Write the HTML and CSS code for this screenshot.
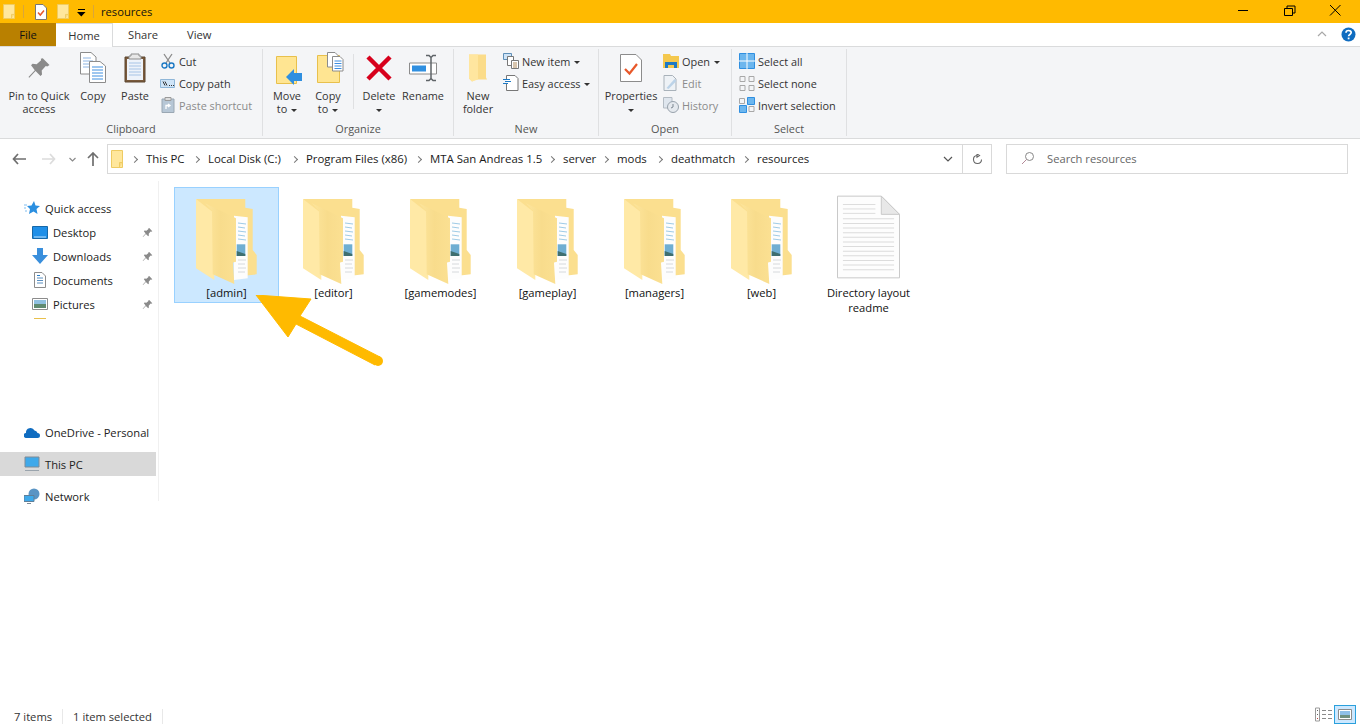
FILE: index.html
```html
<!DOCTYPE html>
<html lang="en">
<head>
    <meta charset="UTF-8" />
    <title>resources</title>
    <link rel="stylesheet" href="styles.css">
</head>
<body>

<!-- Shared icons -->
<svg class="defs" width="0" height="0">
    <defs>
        <linearGradient id="flapShade" x1="0" x2="1" y1="0" y2="0">
            <stop offset="0" stop-color="#fde59c"/>
            <stop offset="0.5" stop-color="#f8dc8c"/>
            <stop offset="1" stop-color="#fbe092"/>
        </linearGradient>
    </defs>
    <symbol id="folderSmall" viewBox="0 0 12 18" preserveAspectRatio="none">
        <path d="M.5.500h11v17H.5z" fill="#ffe79c" stroke="#eecb62"/>
        <path d="M8.500 17.500v-5h3" fill="#f8da80" stroke="#eecb62"/>
    </symbol>
    <symbol id="folderBig" viewBox="0 0 62 86">
        <path d="M0 0H49.300V8.700L56.700 10V51L60.700 56V75.300L46 77Z" fill="#fbdf8f"/>
        <path d="M38 16.700L51.700 18.300V79.300L38 81Z" fill="#fdfdfd"/>
        <path d="M42 24l8 1M42 28l7 1M42 32l8 1M42 36l7 1M42 40l8 1" stroke="#9fcbe6" fill="none"/>
        <path d="M42 61h8M42 65h7M42 69h8M42 73h7" stroke="#d6d9dc" fill="none"/>
        <path d="M40.700 45.300H49.300V57H40.700Z" fill="#6faed2"/>
        <path d="M40.700 52L49.300 55V57H40.700Z" fill="#3f6f70"/>
        <path d="M0 0L18.300 14.300V81L0 69.300Z" fill="#ffe9a6"/>
        <path d="M9 4.300L40 19.300V62.700L37 63.500L38.300 85L16.700 75.300L16 12Z" fill="url(#flapShade)"/>
    </symbol>
    <symbol id="pin" viewBox="0 0 16 16">
        <path d="M10.500 1.500L15 6l-1.500 1-1-.3-2.700 3 .2 2.600-1 1L5.700 10 1.500 14.500 1 14l4.200-4.500L2.700 6.200l1-1 2.700.3 3-2.700-.2-1Z" fill="#8a8a8a"/>
    </symbol>
    <symbol id="pc" viewBox="0 0 16 16">
        <path d="M1 1h14v10H1z" fill="#3fa9ea" stroke="#7e8b96"/>
        <path d="M1 14.500h14" stroke="#9aa4ad"/>
    </symbol>
</svg>

<div class="window">
    <!-- Title bar -->
    <header class="titlebar">
        <svg class="t-folder" width="12" height="15"><use href="#folderSmall"/></svg>
        <span class="t-sep"></span>
        <svg class="t-props" width="12" height="16" viewBox="0 0 12 16">
            <path d="M.5.500H8L11.500 4V15.500H.5Z" fill="#fff" stroke="#777"/>
            <path d="M3 8.500L5.300 11 9 6.500" fill="none" stroke="#e8582a" stroke-width="1.500"/>
        </svg>
        <svg class="t-folder2" width="12" height="15"><use href="#folderSmall"/></svg>
        <svg class="t-drop" width="9" height="8" viewBox="0 0 9 8"><path d="M1 0h7v1H1zM0 3h8.500L4.300 7.500z"/></svg>
        <span class="t-sep"></span>
        <span class="t-name">resources</span>
        <div class="win-btns">
            <svg width="46" height="23" viewBox="0 0 46 23"><path d="M18 10.500h10" stroke="#000"/></svg>
            <svg width="46" height="23" viewBox="0 0 46 23"><path d="M18.500 8.500h8v7h-8zM21 8V6h8v7h-2.500" fill="none" stroke="#000"/></svg>
            <svg width="46" height="23" viewBox="0 0 46 23"><path d="M18 5l10.500 10.500M28.500 5L18 15.500" stroke="#000"/></svg>
        </div>
    </header>

    <!-- Tabs -->
    <nav class="tabs">
        <span class="tab tab-file">File</span>
        <span class="tab tab-home">Home</span>
        <span class="tab tab-share">Share</span>
        <span class="tab tab-view">View</span>
        <svg class="tab-collapse" width="10" height="6" viewBox="0 0 10 6"><path d="M1 5l4-4 4 4" fill="none" stroke="#a8a8a8" stroke-width="1.200"/></svg>
        <svg class="tab-help" width="15" height="15" viewBox="0 0 15 15">
            <circle cx="7.500" cy="7.500" r="7" fill="#0f6cc0"/>
            <path d="M5 5.700C5 2.800 10.200 2.800 10.200 5.600 10.200 7.500 7.600 7.400 7.600 9.300" fill="none" stroke="#fff" stroke-width="1.700"/>
            <path d="M6.700 10.500h1.800v1.800H6.700z" fill="#fff"/>
        </svg>
    </nav>

    <!-- Ribbon -->
    <section class="ribbon">
        <div class="group g-clipboard">
            <div class="group-body">
                <div class="big w-pin">
                    <svg width="24" height="24" class="big-icon"><use href="#pin"/></svg>
                    <span>Pin to Quick<br>access</span>
                </div>
                <div class="big w-copy">
                    <svg width="26" height="32" viewBox="0 0 26 32" class="big-icon">
                        <path d="M.5.500H11L16 5V22H.5Z" fill="#fff" stroke="#8c8c8c"/>
                        <path d="M3 6h8M3 9h10M3 12h10M3 15h10" stroke="#8db4e2"/>
                        <path d="M9.500 9.500H20L25.500 14V30.500H9.500Z" fill="#fff" stroke="#8c8c8c"/>
                        <path d="M12 15h11M12 18h11M12 21h11M12 24h11M12 27h11" stroke="#3f8fe0"/>
                    </svg>
                    <span>Copy</span>
                </div>
                <div class="big w-paste">
                    <svg width="22" height="30" viewBox="0 0 22 30" class="big-icon">
                        <path d="M1 4h20v25H1z" fill="#7a5a3c" stroke="#5d4630"/>
                        <path d="M3 6h16v21H3z" fill="#eef3fa"/>
                        <path d="M5 10h12M5 13h12M5 16h12M5 19h12M5 22h12" stroke="#a7c4e6"/>
                        <path d="M7 1h8v2h2v3H5V3h2z" fill="#e8e8e8" stroke="#8c8c8c"/>
                    </svg>
                    <span>Paste</span>
                </div>
                <div class="small-col">
                    <div class="small">
                        <svg width="14" height="16" viewBox="0 0 14 16">
                            <path d="M3 1l6 9M11 1L5 10" stroke="#8b8b8b" stroke-width="1.300"/>
                            <circle cx="3.500" cy="12.500" r="2.500" fill="none" stroke="#1d79c4" stroke-width="1.400"/>
                            <circle cx="10.500" cy="12.500" r="2.500" fill="none" stroke="#1d79c4" stroke-width="1.400"/>
                        </svg>
                        <span>Cut</span>
                    </div>
                    <div class="small">
                        <svg width="16" height="9" viewBox="0 0 16 9">
                            <path d="M.5.500h14v8H.5z" fill="#cfe4f7" stroke="#8fb6d8"/>
                            <path d="M3 2.500l2 4M5 2.500l2 4M9 6.500h1M11 6.500h1M13 6.500h1" stroke="#333"/>
                        </svg>
                        <span>Copy path</span>
                    </div>
                    <div class="small off">
                        <svg width="14" height="16" viewBox="0 0 14 16">
                            <path d="M1 2h12v13.500H1z" fill="#b7c7d6" stroke="#9aa7b3"/>
                            <path d="M4 .5h6v3H4z" fill="#ddd" stroke="#9a9a9a"/>
                            <path d="M5 12V8.500h4M7 7l2 1.500L7 10" fill="none" stroke="#fff" stroke-width="1.300"/>
                        </svg>
                        <span>Paste shortcut</span>
                    </div>
                </div>
            </div>
            <div class="group-name">Clipboard</div>
        </div>

        <div class="group g-organize">
            <div class="group-body">
                <div class="big w-move">
                    <svg width="27" height="34" viewBox="0 -5 27 34" class="big-icon shift-right">
                        <path d="M.5.500h20v27H.5z" fill="#ffe592" stroke="#e8c04c"/>
                        <path d="M18 13l-8 8 8 8v-4h8v-8h-8z" fill="#2f8fe0"/>
                    </svg>
                    <span>Move<br>to <i class="caret"></i></span>
                </div>
                <div class="big w-copyto">
                    <svg width="27" height="32" viewBox="0 0 27 32" class="big-icon shift-right">
                        <path d="M.5 3.500h22v27H.5z" fill="#ffe592" stroke="#e8c04c"/>
                        <path d="M10.500.5H18l3 3V15H10.500z" fill="#fff" stroke="#8c8c8c"/>
                        <path d="M15.500 4.500H23l3 3V19H15.500z" fill="#fff" stroke="#8c8c8c"/>
                        <path d="M17.500 9h7M17.500 11.500h7M17.500 14h7M17.500 16.500h7" stroke="#3f8fe0"/>
                    </svg>
                    <span>Copy<br>to <i class="caret"></i></span>
                </div>
                <span class="rb-sep"></span>
                <div class="big w-delete">
                    <svg width="26" height="26" viewBox="0 0 26 26" class="big-icon">
                        <path d="M2 2l22 22M24 2L2 24" stroke="#d7001c" stroke-width="4.500"/>
                    </svg>
                    <span>Delete<br><i class="caret"></i></span>
                </div>
                <div class="big w-rename">
                    <svg width="29" height="27" viewBox="0 0 29 27" class="big-icon">
                        <path d="M.5 8.500h27v11H.5z" fill="#fff" stroke="#8c8c8c"/>
                        <path d="M3 11h14v6H3z" fill="#2f8fe0"/>
                        <path d="M17 1h3l2 2 2-2h3M22 3v21M17 26h3l2-2 2 2h3" fill="none" stroke="#5f6468" stroke-width="1.500"/>
                    </svg>
                    <span>Rename</span>
                </div>
            </div>
            <div class="group-name">Organize</div>
        </div>

        <div class="group g-new">
            <div class="group-body">
                <div class="big w-newfolder">
                    <svg width="18" height="27" viewBox="0 0 18 27" class="big-icon">
                        <path d="M0 0h17v23l1 2H7L3 27 0 24z" fill="#fbdc8a"/>
                        <path d="M0 0h9v25l-6 2-3-3z" fill="#ffe69f"/>
                    </svg>
                    <span>New<br>folder</span>
                </div>
                <div class="small-col">
                    <div class="small">
                        <svg width="16" height="16" viewBox="0 0 16 16">
                            <path d="M.5.500h8v6h-8z" fill="#cfe4f7" stroke="#5f8fb8"/>
                            <path d="M4.500 3.500h6v9h-6z" fill="#fff" stroke="#777"/>
                            <path d="M8.500 7.500h7v8h-7z" fill="#fff" stroke="#777"/>
                            <path d="M10 10h4M10 12h4M10 14h4" stroke="#b08a5a"/>
                        </svg>
                        <span>New item <i class="caret"></i></span>
                    </div>
                    <div class="small">
                        <svg width="16" height="16" viewBox="0 0 16 16">
                            <path d="M3.500 4V.5H12l3 3v12H3.500V9" fill="#fff" stroke="#777"/>
                            <path d="M0 4.500h7M2 6.500h6M0 8.500h5" stroke="#1d79c4"/>
                        </svg>
                        <span>Easy access <i class="caret"></i></span>
                    </div>
                </div>
            </div>
            <div class="group-name">New</div>
        </div>

        <div class="group g-open">
            <div class="group-body">
                <div class="big w-props">
                    <svg width="22" height="28" viewBox="0 0 22 28" class="big-icon">
                        <path d="M.5.500H16L21.500 6V27.500H.5Z" fill="#fff" stroke="#8c8c8c"/>
                        <path d="M5 15l4.500 4.500L17 10" fill="none" stroke="#e8582a" stroke-width="2.200"/>
                    </svg>
                    <span>Properties<br><i class="caret"></i></span>
                </div>
                <div class="small-col">
                    <div class="small">
                        <svg width="16" height="14" viewBox="0 0 16 14">
                            <path d="M0 0h7l1 2h8v12H0z" fill="#f4c84e"/>
                            <path d="M2 8h12v6h-3v-3H5v3H2z" fill="#1d79c4"/>
                        </svg>
                        <span>Open <i class="caret"></i></span>
                    </div>
                    <div class="small off">
                        <svg width="15" height="16" viewBox="0 0 15 16">
                            <path d="M.5.500H9L12.500 4V15.500H.5Z" fill="#eef2f6" stroke="#a9b2ba"/>
                            <path d="M3 13L11 4l2 2-8 8z" fill="#bcd3e8"/>
                        </svg>
                        <span>Edit</span>
                    </div>
                    <div class="small off">
                        <svg width="16" height="16" viewBox="0 0 16 16">
                            <path d="M.5.500H9V11H.5z" fill="#dfe6ee" stroke="#b4bcc4"/>
                            <circle cx="10" cy="10" r="5.500" fill="#e5e9ee" stroke="#98a2ac"/>
                            <path d="M10 7v3l-2 1" fill="none" stroke="#7d8791"/>
                        </svg>
                        <span>History</span>
                    </div>
                </div>
            </div>
            <div class="group-name">Open</div>
        </div>

        <div class="group g-select">
            <div class="group-body">
                <div class="small-col">
                    <div class="small">
                        <svg width="16" height="16" viewBox="0 0 16 16">
                            <path d="M.5.500h15v15H.5z" fill="#6cb6ee" stroke="#2f8fe0"/>
                            <path d="M8 0v16M0 8h16" stroke="#fff"/>
                        </svg>
                        <span>Select all</span>
                    </div>
                    <div class="small">
                        <svg width="15" height="15" viewBox="0 0 15 15">
                            <path d="M.5.500h5v5h-5zM9.500.5h5v5h-5zM.5 9.500h5v5h-5zM9.500 9.500h5v5h-5z" fill="none" stroke="#a8a8a8"/>
                        </svg>
                        <span>Select none</span>
                    </div>
                    <div class="small">
                        <svg width="16" height="16" viewBox="0 0 16 16">
                            <path d="M.5 1.500h5v5h-5zM10 9.500h5v5h-5z" fill="none" stroke="#a8a8a8"/>
                            <path d="M8.500.5h7v7h-7zM.5 8.500h7v7h-7z" fill="#6cb6ee" stroke="#2f8fe0"/>
                        </svg>
                        <span>Invert selection</span>
                    </div>
                </div>
            </div>
            <div class="group-name">Select</div>
        </div>
    </section>

    <!-- Address row -->
    <section class="addressbar">
        <svg class="nav-back" width="14" height="12" viewBox="0 0 14 12"><path d="M6 1L1.500 6 6 11M2 6h12" fill="none" stroke="#6f6f6f" stroke-width="1.700"/></svg>
        <svg class="nav-next" width="14" height="12" viewBox="0 0 14 12"><path d="M8 1l4.500 5L8 11M12 6H0" fill="none" stroke="#dcdcdc" stroke-width="1.700"/></svg>
        <svg class="nav-down" width="7" height="5" viewBox="0 0 7 5"><path d="M.5 1l3 3 3-3" fill="none" stroke="#8a8a8a" stroke-width="1.200"/></svg>
        <svg class="nav-up" width="12" height="14" viewBox="0 0 12 14"><path d="M1 6l5-5 5 5M6 2v12" fill="none" stroke="#6f6f6f" stroke-width="1.700"/></svg>
        <div class="address">
            <svg class="addr-folder" width="12" height="18"><use href="#folderSmall"/></svg>
            <div class="crumbs">
                <span class="crumb w-c1">This PC</span>
                <span class="crumb w-c2">Local Disk (C:)</span>
                <span class="crumb w-c3">Program Files (x86)</span>
                <span class="crumb w-c4">MTA San Andreas 1.5</span>
                <span class="crumb w-c5">server</span>
                <span class="crumb w-c6">mods</span>
                <span class="crumb w-c7">deathmatch</span>
                <span class="crumb w-c8">resources</span>
            </div>
            <svg class="addr-down" width="10" height="6" viewBox="0 0 10 6"><path d="M1 1l4 4 4-4" fill="none" stroke="#555" stroke-width="1.200"/></svg>
            <div class="addr-refresh">
                <svg width="11" height="11" viewBox="0 0 11 11"><path d="M5 1.500A4 4 0 1 0 9.500 5.500M5 0v3.200L7.500 1.500z" fill="none" stroke="#666" stroke-width="1.100"/></svg>
            </div>
        </div>
        <div class="search">
            <svg width="14" height="14" viewBox="0 0 14 14"><circle cx="8.500" cy="5.500" r="4" fill="none" stroke="#888"/><path d="M5.500 8.500L1 13" stroke="#b48a98"/></svg>
            <span>Search resources</span>
        </div>
    </section>

    <!-- Sidebar and files -->
    <main class="main">
        <aside class="sidebar">
            <div class="side-group">
                <div class="side-item head">
                    <svg width="16" height="16" viewBox="0 0 16 16">
                        <path d="M10 1l1.500 4.500L16 6l-3.500 3 1 5L9.500 11.500 5 14l1-5-3-3 4.500-.5z" fill="#2b8fe0"/>
                        <path d="M0 5h3M0 8h2M1 11h2" stroke="#7fbdf0"/>
                    </svg>
                    <span>Quick access</span>
                </div>
                <div class="side-item sub">
                    <svg width="16" height="13" viewBox="0 0 16 13"><path d="M.5.500h15v12H.5z" fill="#1f8fe8" stroke="#1668a8"/><path d="M2 11h12" stroke="#bfe0fa"/></svg>
                    <span>Desktop</span>
                    <svg class="pin-mark" width="11" height="11"><use href="#pin"/></svg>
                </div>
                <div class="side-item sub">
                    <svg width="16" height="16" viewBox="0 0 16 16"><path d="M5 0h6v7h5l-8 9-8-9h5z" fill="#3a8fdc"/></svg>
                    <span>Downloads</span>
                    <svg class="pin-mark" width="11" height="11"><use href="#pin"/></svg>
                </div>
                <div class="side-item sub">
                    <svg width="12" height="16" viewBox="0 0 12 16" class="ic-doc"><path d="M.5.500H8L11.500 4V15.500H.5Z" fill="#fff" stroke="#8c8c8c"/><path d="M3 6h6M3 8.500h6M3 11h6" stroke="#5a8fc0"/><path d="M3 3.500h3" stroke="#2b7fc8"/></svg>
                    <span>Documents</span>
                    <svg class="pin-mark" width="11" height="11"><use href="#pin"/></svg>
                </div>
                <div class="side-item sub">
                    <svg width="16" height="12" viewBox="0 0 16 12"><path d="M.5.500h15v11H.5z" fill="#fff" stroke="#8c8c8c"/><path d="M2 2h12v4H2z" fill="#8fc0e0"/><path d="M2 6h12v4H2z" fill="#5f8a70"/></svg>
                    <span>Pictures</span>
                    <svg class="pin-mark" width="11" height="11"><use href="#pin"/></svg>
                </div>
                <div class="side-clip"></div>
            </div>
            <div class="side-group onedrive">
                <div class="side-item head">
                    <svg width="16" height="11" viewBox="0 0 16 11"><path d="M2.500 11A2.500 2.500 0 0 1 2 6 4.500 4.500 0 0 1 10.500 3.500 3.800 3.800 0 0 1 13.500 6 2.500 2.500 0 0 1 13.500 11Z" fill="#0f6cc0"/></svg>
                    <span>OneDrive - Personal</span>
                </div>
            </div>
            <div class="side-group">
                <div class="side-item head active">
                    <svg width="16" height="16"><use href="#pc"/></svg>
                    <span>This PC</span>
                </div>
            </div>
            <div class="side-group">
                <div class="side-item head net">
                    <svg width="16" height="16" viewBox="0 0 16 16">
                        <circle cx="10" cy="6" r="5.500" fill="#5a94c4"/>
                        <path d="M0 7.500h10v6H0z" fill="#3fa9ea" stroke="#5f7f99"/>
                        <path d="M3 15.500h4" stroke="#7e8b96"/>
                    </svg>
                    <span>Network</span>
                </div>
            </div>
        </aside>

        <section class="files">
            <div class="tile selected"><svg class="tile-icon" width="62" height="86"><use href="#folderBig"/></svg><span>[admin]</span></div>
            <div class="tile"><svg class="tile-icon" width="62" height="86"><use href="#folderBig"/></svg><span>[editor]</span></div>
            <div class="tile"><svg class="tile-icon" width="62" height="86"><use href="#folderBig"/></svg><span>[gamemodes]</span></div>
            <div class="tile"><svg class="tile-icon" width="62" height="86"><use href="#folderBig"/></svg><span>[gameplay]</span></div>
            <div class="tile"><svg class="tile-icon" width="62" height="86"><use href="#folderBig"/></svg><span>[managers]</span></div>
            <div class="tile"><svg class="tile-icon" width="62" height="86"><use href="#folderBig"/></svg><span>[web]</span></div>
            <div class="tile">
                <svg class="tile-icon doc-icon" width="63" height="84" viewBox="0 0 64 84">
                    <path d="M.5.500H45L63.500 19V83.500H.5Z" fill="#fdfdfd" stroke="#c8c8c8"/>
                    <path d="M45 .5V19H63.500Z" fill="#e8e8e8" stroke="#c8c8c8"/>
                    <path d="M6 9h33M6 13.500h33M6 18h33" stroke="#dcdcdc"/>
                    <path d="M32 23V79" stroke="#dcdcdc" stroke-width="52" stroke-dasharray="1 3.700"/>
                </svg>
                <span>Directory layout<br>readme</span>
            </div>
        </section>
    </main>

    <!-- Status bar -->
    <footer class="statusbar">
        <span class="st-count">7 items</span>
        <span class="st-sep"></span>
        <span class="st-sel">1 item selected</span>
        <span class="st-sep"></span>
        <div class="views">
            <svg class="view-details" width="17" height="15" viewBox="0 0 17 15">
                <path d="M.5 1h4v13h-4z" fill="none" stroke="#9a9a9a"/>
                <path d="M2 3.500h1M2 7.500h1" stroke="#666"/>
                <path d="M2 11.500h1" stroke="#c04040"/>
                <path d="M7 3.500h4M13 3.500h4M7 7.500h4M13 7.500h4M7 11.500h4M13 11.500h4" stroke="#8a8a8a"/>
            </svg>
            <div class="view-large">
                <svg width="14" height="11" viewBox="0 0 14 11">
                    <path d="M.5.500h13v10H.5z" fill="#fff" stroke="#8c8c8c"/>
                    <path d="M2 2h10v4H2z" fill="#8fc0e8"/>
                    <path d="M2 6h10v3H2z" fill="#6f9080"/>
                </svg>
            </div>
        </div>
    </footer>

    <!-- Yellow arrow drawn over the screenshot -->
    <svg class="callout" width="140" height="75" viewBox="0 0 140 75">
        <path d="M3 0L58 4 47 21 127 62 122 70 43 29 35 42Z" fill="#ffba00" stroke="#ffba00" stroke-linejoin="round"/>
        <circle cx="125" cy="66" r="5" fill="#ffba00"/>
    </svg>
</div>

</body>
</html>
```

FILE: styles.css
```css
html, body {
    margin: 0;
    padding: 0;
    width: 100%;
    height: 100%;
    overflow: hidden;
    background: #fff;
    color: #1a1a1a;
    font-family: 'Open Sans', 'Noto Sans', sans-serif;
    font-size: 11.2px;
}

svg {
    display: block;
    flex: none;
}

.defs {
    position: absolute;
}

.window {
    position: relative;
    display: flex;
    flex-direction: column;
    height: 727px;
}

/* Title bar */
.titlebar {
    display: flex;
    align-items: center;
    height: 23px;
    background: #ffba00;
    color: #111;
}

.t-folder {
    margin-left: 3px;
}

.t-sep {
    width: 1px;
    height: 13px;
    background: #d9a63a;
    margin-left: 8px;
}

.t-props {
    margin-left: 11px;
}

.t-folder2 {
    margin-left: 10px;
}

.t-drop {
    margin-left: 8px;
    margin-top: 2px;
}

.t-drop + .t-sep {
    margin-left: 7px;
}

.t-name {
    margin-left: 7px;
}

.win-btns {
    display: flex;
    margin-left: auto;
    margin-right: 2px;
}

/* Tabs */
.tabs {
    display: flex;
    align-items: stretch;
    height: 24px;
    box-sizing: border-box;
    border-bottom: 1px solid #dadbdc;
}

.tab {
    display: flex;
    align-items: center;
    justify-content: center;
    height: 23px;
    color: #333;
}

.tab-file {
    width: 56px;
    background: #b98000;
    color: #111;
}

.tab-home {
    width: 57px;
    height: 24px;
    box-sizing: border-box;
    border: 1px solid #dadbdc;
    border-width: 1px 1px 0 0;
    background: #fff;
}

.tab-share {
    margin-left: 15px;
}

.tab-view {
    margin-left: 29px;
}

.tab-collapse {
    margin: 8px 0 0 auto;
}

.tab-help {
    margin: 4px 4px 0 14px;
}

/* Ribbon */
.ribbon {
    display: flex;
    height: 92px;
    box-sizing: border-box;
    padding: 2px 0;
    background: #f4f5f7;
    border-bottom: 1px solid #dadbdc;
    font-size: 10.9px;
}

.group {
    display: flex;
    flex-direction: column;
    box-sizing: border-box;
    border-right: 1px solid #dfe0e2;
}

.g-clipboard { width: 263px; padding-left: 8px; }
.g-organize { width: 191px; padding-left: 4px; }
.g-new { width: 145px; padding-left: 4px; }
.g-open { width: 133px; padding-left: 4px; }
.g-select { width: 115px; padding-left: 7px; }

.group-body {
    display: flex;
    flex: 1;
    padding-top: 1px;
}

.group-name {
    height: 15px;
    line-height: 15px;
    text-align: center;
    color: #555;
}

/* labels are centred on the whole group, not on the padded part */
.g-clipboard .group-name { margin-left: -8px; }
.g-organize .group-name { margin-left: -4px; }
.g-new .group-name { margin-left: -4px; }
.g-open .group-name { margin-left: -4px; }
.g-select .group-name { margin-left: -7px; }

.big {
    display: flex;
    flex-direction: column;
    align-items: center;
    padding-top: 1px;
    text-align: center;
    white-space: nowrap;
    line-height: 13px;
    color: #333;
}

.big-icon {
    height: 34px;
    margin-bottom: 4px;
}

.shift-right {
    margin-left: 5px;
}

.w-pin { width: 62px; }
.w-copy { width: 46px; }
.w-paste { width: 38px; }
.w-move { width: 40px; }
.w-copyto { width: 42px; }
.w-delete { width: 44px; }
.w-rename { width: 44px; }
.w-newfolder { width: 40px; }
.w-props { width: 56px; }

.rb-sep {
    width: 1px;
    height: 55px;
    margin: 4px 3px 0 4px;
    background: #dfe0e2;
}

.caret {
    display: inline-block;
    border: 3px solid transparent;
    border-top-color: #333;
    border-bottom-width: 0;
    vertical-align: middle;
    margin-left: 1px;
}

.small-col {
    display: flex;
    flex-direction: column;
    margin-left: 6px;
}

.g-new .small-col {
    margin-left: 5px;
}

.g-open .small-col {
    margin-left: 4px;
}

.g-select .small-col {
    margin-left: 0;
}

.small {
    display: flex;
    align-items: center;
    gap: 3px;
    height: 22px;
    color: #333;
}

.small svg {
    width: 16px;
}

.small.off {
    color: #8b8b8b;
}

/* Address row */
.addressbar {
    display: flex;
    align-items: center;
    height: 40px;
}

.nav-back { margin-left: 12px; }
.nav-next { margin-left: 16px; }
.nav-down { margin-left: 13px; }
.nav-up { margin-left: 11px; }

.address {
    display: flex;
    align-items: center;
    width: 885px;
    height: 30px;
    margin-left: 8px;
    box-sizing: border-box;
    border: 1px solid #d9d9d9;
}

.addr-folder {
    margin-left: 3px;
}

.crumbs {
    display: flex;
    margin-top: -2px;
    font-size: 11.4px;
}

/* the chevron sits at the start of every crumb */
.crumb {
    position: relative;
    box-sizing: border-box;
    padding-left: 23px;
    white-space: nowrap;
}

.crumb::before {
    content: "";
    position: absolute;
    left: 9px;
    top: 6px;
    width: 4px;
    height: 4px;
    border: solid #777;
    border-width: 1px 1px 0 0;
    transform: rotate(45deg);
}

.w-c1 { width: 62px; }
.w-c2 { width: 98px; }
.w-c3 { width: 124px; }
.w-c4 { width: 133px; }
.w-c5 { width: 54px; }
.w-c6 { width: 54px; }
.w-c7 { width: 86px; }
.w-c8 { width: 70px; }

.addr-down {
    margin-left: auto;
    margin-right: 9px;
}

.addr-refresh {
    display: flex;
    align-items: center;
    justify-content: center;
    width: 28px;
    height: 100%;
    border-left: 1px solid #d9d9d9;
}

.search {
    display: flex;
    align-items: center;
    gap: 12px;
    width: 342px;
    height: 30px;
    margin-left: 14px;
    padding: 0 0 2px 14px;
    box-sizing: border-box;
    border: 1px solid #d9d9d9;
    color: #666;
}

/* Sidebar */
.main {
    display: flex;
    flex: 1;
    min-height: 0;
}

.sidebar {
    width: 159px;
    margin-top: 2px;
    height: 320px;
    box-sizing: border-box;
    border-right: 1px solid #f0f0f0;
    padding-top: 15px;
    flex: none;
}

.side-item {
    display: flex;
    align-items: center;
    height: 24px;
    width: 156px;
    color: #222;
}

.side-item.head {
    padding-left: 24px;
    gap: 5px;
    box-sizing: border-box;
}

.side-item.sub {
    padding-left: 32px;
    gap: 5px;
    box-sizing: border-box;
}

.ic-doc {
    margin: 0 2px;
}

.pin-mark {
    margin-left: auto;
    margin-right: 3px;
}

.side-clip {
    width: 12px;
    height: 1px;
    margin: 2px 0 0 34px;
    background: #e8c04c;
}

.onedrive {
    margin-top: 101px;
}

.onedrive + .side-group {
    margin-top: 8px;
}

.side-item.active {
    background: #d9d9d9;
}

.side-item.net {
    margin-top: 8px;
}

/* File tiles */
.files {
    display: flex;
    align-items: flex-start;
    gap: 2px;
    padding: 8px 0 0 15px;
}

.tile {
    display: flex;
    flex-direction: column;
    align-items: center;
    width: 105px;
    height: 116px;
    box-sizing: border-box;
    border: 1px solid transparent;
    padding-top: 11px;
    line-height: 15px;
    text-align: center;
    color: #111;
}

.tile.selected {
    background: #cce8ff;
    border-color: #99d1ff;
}

.tile-icon {
    height: 86px;
}

.doc-icon {
    margin: -4px 0 6px 0;
    height: 84px;
}

/* Status bar */
.statusbar {
    display: flex;
    align-items: center;
    height: 22px;
    color: #333;
}

.st-count {
    margin-left: 14px;
}

.st-sep {
    width: 1px;
    height: 15px;
    margin-left: 10px;
    background: #e8e8e8;
}

.st-sel {
    margin-left: 10px;
}

.views {
    display: flex;
    align-items: center;
    align-self: flex-start;
    margin-left: auto;
    margin-right: 4px;
    gap: 2px;
}

.view-large {
    display: flex;
    align-items: center;
    justify-content: center;
    width: 22px;
    height: 19px;
    box-sizing: border-box;
    border: 1px solid #2aa0dc;
    background: #cce8ff;
}

.callout {
    position: absolute;
    left: 253px;
    top: 295px;
}
```
